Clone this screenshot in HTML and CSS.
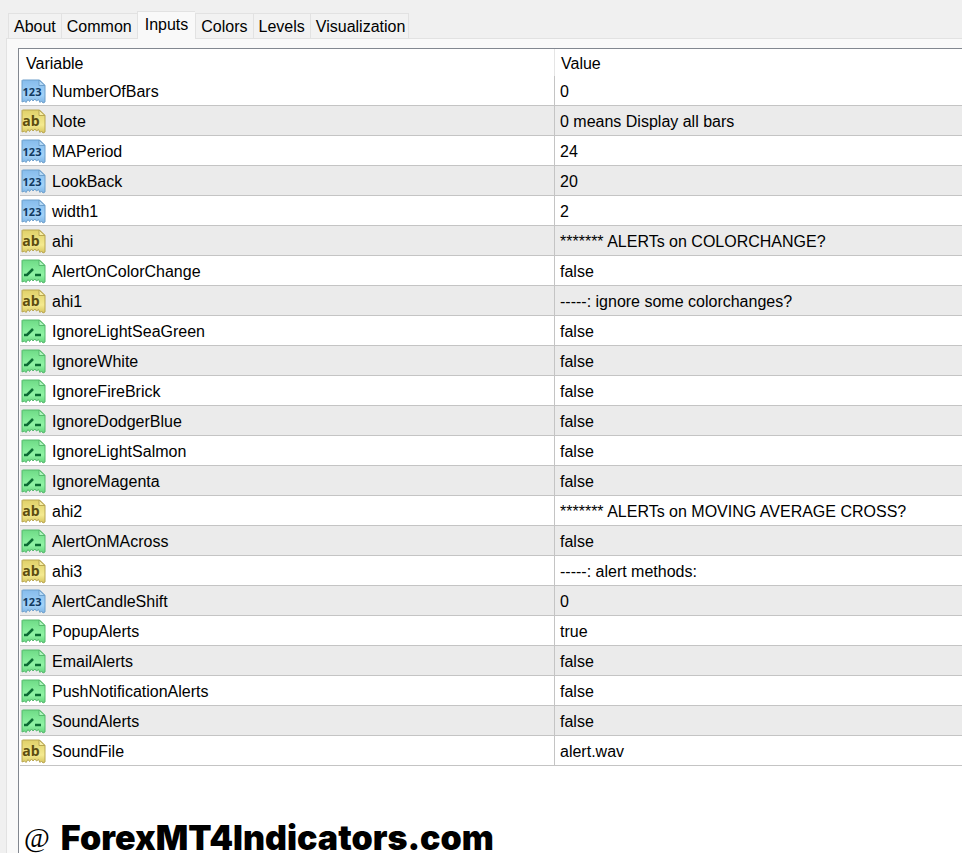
FILE: index.html
```html
<!DOCTYPE html>
<html lang="en">
<head>
  <meta charset="UTF-8">
  <title>Indicator Inputs</title>
  <link rel="stylesheet" href="styles.css">
</head>
<body>

<svg class="sprite" aria-hidden="true">
  <defs>
    <linearGradient id="fill-int" x1="0" y1="0" x2="0" y2="1">
      <stop offset="0" stop-color="#86bcec"/>
      <stop offset=".65" stop-color="#a3d2f8"/>
      <stop offset="1" stop-color="#7db4e4"/>
    </linearGradient>
    <linearGradient id="fill-string" x1="0" y1="0" x2="0" y2="1">
      <stop offset="0" stop-color="#e0d068"/>
      <stop offset=".65" stop-color="#f4ea90"/>
      <stop offset="1" stop-color="#d6c45c"/>
    </linearGradient>
    <linearGradient id="fill-bool" x1="0" y1="0" x2="0" y2="1">
      <stop offset="0" stop-color="#6edb86"/>
      <stop offset=".65" stop-color="#90f3a5"/>
      <stop offset="1" stop-color="#60d27a"/>
    </linearGradient>
    <path id="paper" d="M1.500 1H18.500L24 6.500V23L22 24L20.500 22L19 23.500L17.500 20.500L15.500 22L14 20L12 22L10.500 20L8.500 22.500L7 20.500L5 23.500L3.500 22L1 23V1.500Z"/>
    <path id="fold" d="M18 1V6.500H24Z"/>
  </defs>
</svg>

<div class="dialog">
  <div class="tabs" role="tablist">
    <button class="tab" role="tab">About</button>
    <button class="tab" role="tab">Common</button>
    <button class="tab active" role="tab" aria-selected="true">Inputs</button>
    <button class="tab" role="tab">Colors</button>
    <button class="tab" role="tab">Levels</button>
    <button class="tab" role="tab">Visualization</button>
  </div>

  <div class="panel" role="tabpanel">
    <div class="list">
      <table class="inputs">
        <thead>
          <tr><th class="variable">Variable</th><th>Value</th></tr>
        </thead>
        <tbody id="rows"></tbody>
      </table>
      <div class="watermark"><span class="at">@</span><span>ForexMT4Indicators.com</span></div>
    </div>
  </div>
</div>

<script src="script.js"></script>
</body>
</html>
```
FILE: styles.css
```css
body {
  margin: 0;
  background: #f0f0f0;
  color: #000;
  font-family: "Liberation Sans", Arial, sans-serif;
  font-size: 16px;
}
.sprite {
  position: absolute;
  width: 0;
  height: 0;
}
.dialog {
  display: flex;
  flex-direction: column;
  box-sizing: border-box;
  min-height: 100vh;
  padding: 11px 0 0 6px;
}
.tabs {
  display: flex;
  align-items: flex-end;
  padding-left: 2px;
}
.tab {
  height: 25px;
  margin: 0;
  padding: 2px 5px 0;
  border: 1px solid #e2e2e2;
  border-width: 1px 0 0 1px;
  background: #f2f2f2;
  color: #000;
  font: inherit;
  white-space: nowrap;
}
.tab:last-child {
  padding-right: 3px;
  border-right-width: 1px;
}
.tab.active {
  height: 28px;
  margin-bottom: -1px;
  padding: 0 7px 2px;
  background: #f9f9f9;
  z-index: 1;
}
.panel {
  display: flex;
  flex: 1;
  padding: 9px 0 0 11px;
  border: 1px solid #e2e2e2;
  border-width: 1px 0 0 1px;
  background: #f9f9f9;
}
.list {
  flex: 1;
  padding-left: 1px;
  border: 1px solid #828790;
  border-width: 1px 0 0 1px;
  background: #fff;
}
.inputs {
  width: 100%;
  table-layout: fixed;
  border-collapse: separate;
  border-spacing: 0;
}
.inputs th {
  height: 25px;
  padding: 2px 6px 0;
  font-weight: normal;
  text-align: left;
}
.inputs .variable {
  box-sizing: border-box;
  width: 535px;
  height: 27px;
  border-right: 1px solid #e5e5e5;
}
.inputs td {
  height: 27px;
  padding: 2px 5px 0;
  border-bottom: 1px solid #c4c4c4;
  white-space: nowrap;
}
.inputs td:first-child {
  padding-left: 1px;
  border-right: 1px solid #c4c4c4;
}
.inputs tbody tr:nth-child(even) {
  background: #ebebeb;
}
.name {
  display: flex;
  align-items: center;
  gap: 6px;
}
.icon {
  width: 25px;
  height: 25px;
}
.icon text {
  font-family: "Open Sans", sans-serif;
  font-weight: bold;
  text-anchor: middle;
}
.int {
  fill: url(#fill-int);
  stroke: #6d9fcb;
}
.int .fold {
  fill: #b9dcf8;
}
.int text {
  fill: #10395f;
  stroke: none;
  font-size: 11px;
}
.string {
  fill: url(#fill-string);
  stroke: #b8a650;
}
.string .fold {
  fill: #f7efa8;
}
.string text {
  fill: #5c4d10;
  stroke: none;
  font-size: 14px;
}
.bool {
  fill: url(#fill-bool);
  stroke: #55b86c;
}
.bool .fold {
  fill: #b0f7c0;
}
.bool .switch {
  fill: none;
  stroke: #0b6a33;
  stroke-width: 2.5;
}
.watermark {
  display: flex;
  align-items: center;
  gap: 11px;
  margin-top: 56px;
  padding-left: 4px;
  font-family: "Arial Black", Inter, sans-serif;
  font-size: 34px;
  font-weight: 900;
  line-height: 31px;
  white-space: nowrap;
}
.at {
  font-family: "Liberation Serif", serif;
  font-size: 28px;
  font-weight: normal;
}
```
FILE: script.js
```javascript
const inputs = [
  ["int", "NumberOfBars", "0"],
  ["string", "Note", "0 means Display all bars"],
  ["int", "MAPeriod", "24"],
  ["int", "LookBack", "20"],
  ["int", "width1", "2"],
  ["string", "ahi", "******* ALERTs on COLORCHANGE?"],
  ["bool", "AlertOnColorChange", "false"],
  ["string", "ahi1", "-----: ignore some colorchanges?"],
  ["bool", "IgnoreLightSeaGreen", "false"],
  ["bool", "IgnoreWhite", "false"],
  ["bool", "IgnoreFireBrick", "false"],
  ["bool", "IgnoreDodgerBlue", "false"],
  ["bool", "IgnoreLightSalmon", "false"],
  ["bool", "IgnoreMagenta", "false"],
  ["string", "ahi2", "******* ALERTs on MOVING AVERAGE CROSS?"],
  ["bool", "AlertOnMAcross", "false"],
  ["string", "ahi3", "-----: alert methods:"],
  ["int", "AlertCandleShift", "0"],
  ["bool", "PopupAlerts", "true"],
  ["bool", "EmailAlerts", "false"],
  ["bool", "PushNotificationAlerts", "false"],
  ["bool", "SoundAlerts", "false"],
  ["string", "SoundFile", "alert.wav"]
];

// what is drawn on the sheet of paper for each type
const marks = {
  int: '<text x="11" y="17">123</text>',
  string: '<text x="10" y="17">ab</text>',
  bool: '<path class="switch" d="M3 16H6L12 10M14 16H20"/>'
};

function icon(type) {
  return `<svg class="icon ${type}" viewBox="0 0 25 25" aria-hidden="true">
    <use href="#paper"/><use class="fold" href="#fold"/>${marks[type]}
  </svg>`;
}

document.getElementById("rows").innerHTML = inputs.map(([type, name, value]) => `
  <tr>
    <td><div class="name">${icon(type)}${name}</div></td>
    <td>${value}</td>
  </tr>`).join("");
```
